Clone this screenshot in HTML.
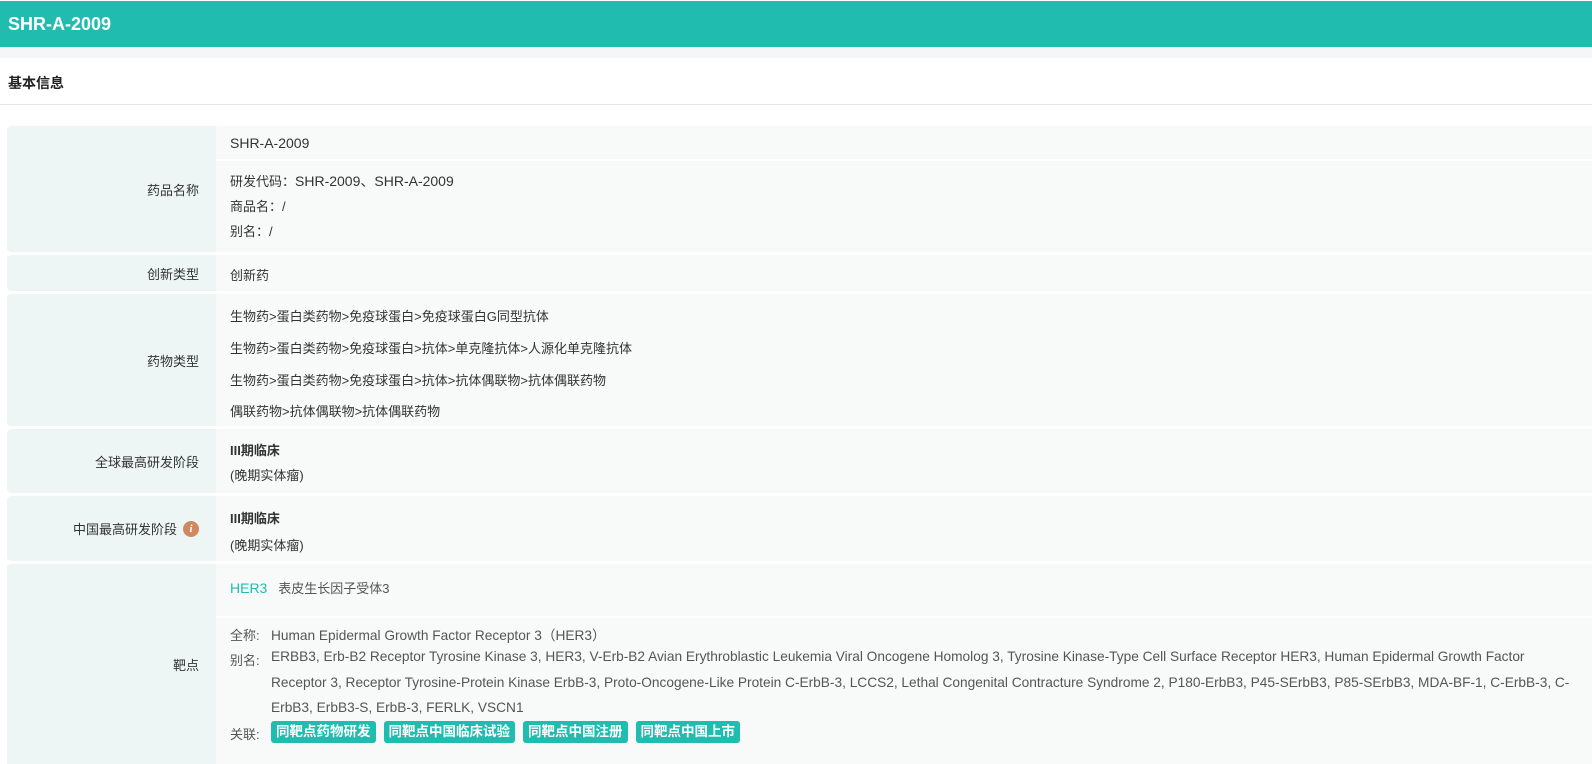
<!DOCTYPE html>
<html><head><meta charset="utf-8"><style>
*{margin:0;padding:0;box-sizing:border-box}
body{width:1592px;height:764px;overflow:hidden;background:#fff;font-family:"Liberation Sans","Noto Sans CJK SC",sans-serif;color:#333;font-size:13px;position:relative}
.hdr{position:absolute;left:0;top:1px;width:1592px;height:46px;background:#20bcb0;color:#fff;font-weight:bold;font-size:18px;line-height:46px;padding-left:8px}
.gap{position:absolute;left:0;top:47px;width:1592px;height:11px;background:#f5f6f8}
.sec{position:absolute;left:8px;top:73px;font-weight:bold;font-size:14px;color:#222}
.line{position:absolute;left:0;top:104px;width:1592px;height:1px;background:#e6e6e6}
.lab{position:absolute;left:7px;width:209px;background:#eef6f5;border-radius:4px 0 0 4px;text-align:right;padding-right:17px;display:flex;align-items:center;justify-content:flex-end;color:#333}
.val{position:absolute;left:216px;width:1376px;background:#f8fafa}
.t{position:absolute;left:230px;white-space:nowrap;color:#333}
.b{font-weight:bold}
.g{color:#555;font-size:13.7px}
.k{position:absolute;left:230px;color:#555;font-size:13px}
.tag{display:inline-block;background:#20bcb0;color:#fff;font-weight:bold;border-radius:3px;padding:0 5px;height:22px;line-height:22px;margin-right:8px;font-size:13.5px}
.sep{position:absolute;left:216px;width:1376px;height:2px;background:#fff}
.l{font-size:14px}
</style></head><body>
<div class="hdr">SHR-A-2009</div>
<div class="gap"></div>
<div class="sec">基本信息</div>
<div class="line"></div>

<div class="lab" style="top:126px;height:126px">药品名称</div>
<div class="val" style="top:126px;height:126px"></div>
<div class="sep" style="top:159px"></div>
<div class="t l" style="top:135px">SHR-A-2009</div>
<div class="t" style="top:171px">研发代码：<span class="l">SHR-2009、SHR-A-2009</span></div>
<div class="t" style="top:196px">商品名：/</div>
<div class="t" style="top:221px">别名：/</div>

<div class="lab" style="top:255px;height:36px">创新类型</div>
<div class="val" style="top:255px;height:36px"></div>
<div class="t" style="top:265px">创新药</div>

<div class="lab" style="top:294px;height:132px">药物类型</div>
<div class="val" style="top:294px;height:132px"></div>
<div class="t" style="top:306px">生物药&gt;蛋白类药物&gt;免疫球蛋白&gt;免疫球蛋白G同型抗体</div>
<div class="t" style="top:338px">生物药&gt;蛋白类药物&gt;免疫球蛋白&gt;抗体&gt;单克隆抗体&gt;人源化单克隆抗体</div>
<div class="t" style="top:370px">生物药&gt;蛋白类药物&gt;免疫球蛋白&gt;抗体&gt;抗体偶联物&gt;抗体偶联药物</div>
<div class="t" style="top:401px">偶联药物&gt;抗体偶联物&gt;抗体偶联药物</div>

<div class="lab" style="top:429px;height:64px">全球最高研发阶段</div>
<div class="val" style="top:429px;height:64px"></div>
<div class="t b" style="top:440px">III期临床</div>
<div class="t" style="top:465px">(晚期实体瘤)</div>

<div class="lab" style="top:496px;height:65px">中国最高研发阶段<span style="display:inline-block;width:16px;height:16px;border-radius:50%;background:#d08860;color:#fff;font-size:11px;font-style:italic;font-weight:bold;text-align:center;line-height:16px;margin-left:6px;font-family:'Liberation Serif',serif">i</span></div>
<div class="val" style="top:496px;height:65px"></div>
<div class="t b" style="top:508px">III期临床</div>
<div class="t" style="top:535px">(晚期实体瘤)</div>

<div class="lab" style="top:564px;height:200px;border-radius:4px 0 0 0">靶点</div>
<div class="val" style="top:564px;height:200px"></div>
<div class="sep" style="top:616px"></div>
<div class="t" style="top:578px"><span style="color:#20bcb0" class="l">HER3</span>&nbsp;&nbsp;&nbsp;<span style="color:#555">表皮生长因子受体3</span></div>
<div class="k" style="top:625px">全称:</div>
<div class="t g" style="top:624px;left:271px">Human Epidermal Growth Factor Receptor 3（HER3）</div>
<div class="k" style="top:650px">别名:</div>
<div class="t g" style="top:649px;left:271px">ERBB3, Erb-B2 Receptor Tyrosine Kinase 3, HER3, V-Erb-B2 Avian Erythroblastic Leukemia Viral Oncogene Homolog 3, Tyrosine Kinase-Type Cell Surface Receptor HER3, Human Epidermal Growth Factor</div>
<div class="t g" style="top:675px;left:271px">Receptor 3, Receptor Tyrosine-Protein Kinase ErbB-3, Proto-Oncogene-Like Protein C-ErbB-3, LCCS2, Lethal Congenital Contracture Syndrome 2, P180-ErbB3, P45-SErbB3, P85-SErbB3, MDA-BF-1, C-ErbB-3, C-</div>
<div class="t g" style="top:700px;left:271px">ErbB3, ErbB3-S, ErbB-3, FERLK, VSCN1</div>
<div class="k" style="top:724px">关联:</div>
<div class="t" style="top:721px;left:271px"><span class="tag">同靶点药物研发</span><span class="tag">同靶点中国临床试验</span><span class="tag">同靶点中国注册</span><span class="tag">同靶点中国上市</span></div>
</body></html>
